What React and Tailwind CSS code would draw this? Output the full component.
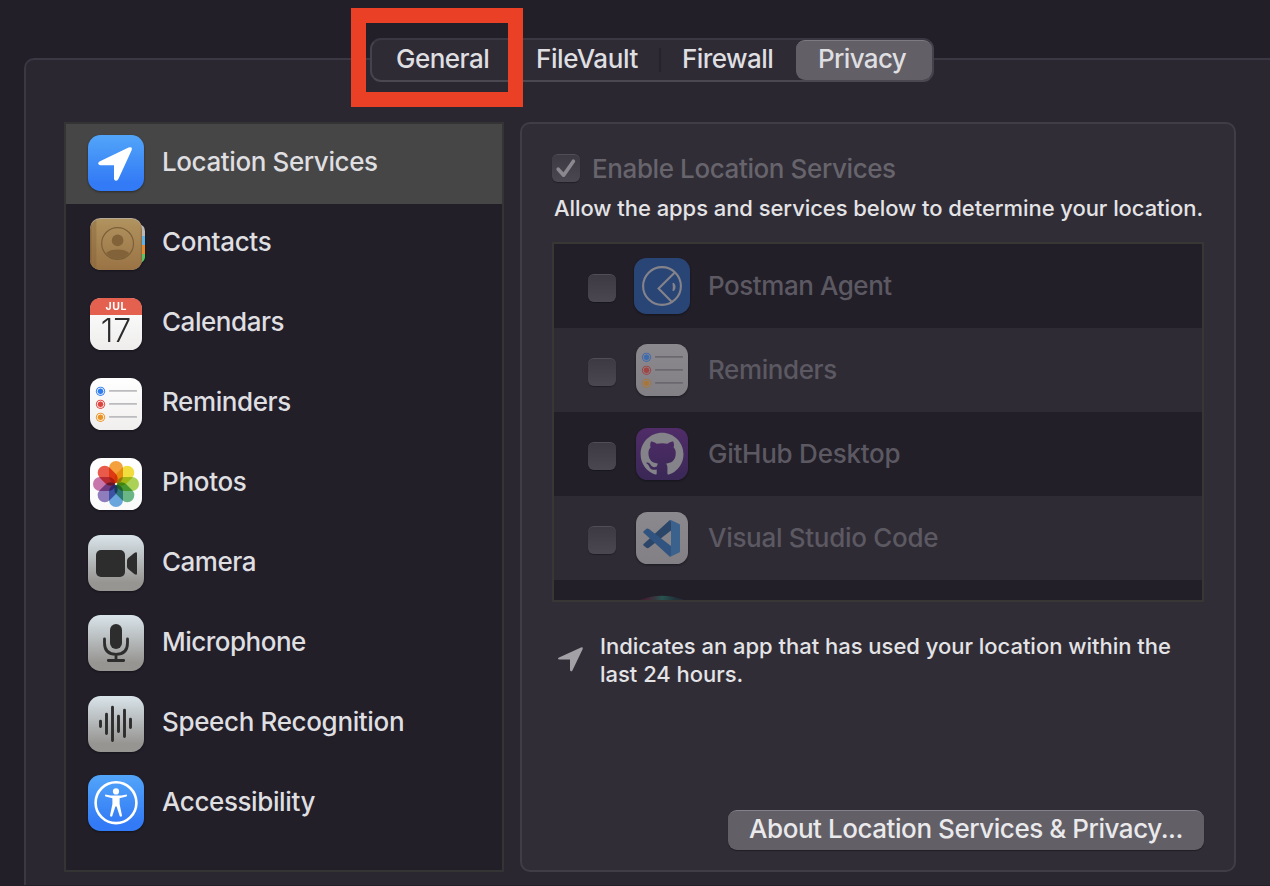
import React from "react";

function Tile({ id, from, to, children }) {
  return (
    <svg viewBox="0 0 56 56" className="block size-14 shrink-0 overflow-visible drop-shadow-[0_1px_1px_rgba(0,0,0,0.4)]">
      <defs>
        <linearGradient id={id} x1="0" y1="0" x2="0" y2="1">
          <stop offset="0" stopColor={from} />
          <stop offset="0.85" stopColor={to} />
        </linearGradient>
      </defs>
      <rect width="56" height="56" rx="12.5" fill={`url(#${id})`} />
      {children}
    </svg>
  );
}

function SmallTile({ id, from, to, children }) {
  return (
    <svg viewBox="0 0 56 56" className="block size-14 shrink-0 overflow-visible drop-shadow-[0_1px_1px_rgba(0,0,0,0.4)]">
      <defs>
        <linearGradient id={id} x1="0" y1="0" x2="0" y2="1">
          <stop offset="0" stopColor={from} />
          <stop offset="1" stopColor={to} />
        </linearGradient>
      </defs>
      <rect x="2" y="2" width="52" height="52" rx="11.5" fill={`url(#${id})`} />
      {children}
    </svg>
  );
}

function LocationIcon() {
  return (
    <Tile id="loc" from="#52a5f9" to="#337bf6">
      <path d="M12 26.2 L40.6 12.6 Q44.8 11 43.6 15.2 L30.4 44 Q29.2 46.4 27.2 45.6 Q26 45 26 43.4 V30.2 H12.4 Q10.4 30 10.2 28.4 Q10.1 27 12 26.2 Z" fill="#fff" />
    </Tile>
  );
}

function ContactsIcon() {
  return (
    <svg viewBox="0 0 56 56" className="block size-14 shrink-0 overflow-visible drop-shadow-[0_1px_1px_rgba(0,0,0,0.4)]">
      <defs>
        <linearGradient id="book" x1="0" y1="0" x2="0" y2="1">
          <stop offset="0" stopColor="#b0935f" />
          <stop offset="1" stopColor="#9a7344" />
        </linearGradient>
        <linearGradient id="spine" x1="0" y1="0" x2="1" y2="0">
          <stop offset="0" stopColor="#6d4f2c" stopOpacity="0.7" />
          <stop offset="0.05" stopColor="#7e5c34" stopOpacity="0.3" />
          <stop offset="0.1" stopColor="#7e5c34" stopOpacity="0.4" />
          <stop offset="0.14" stopColor="#7e5c34" stopOpacity="0" />
          <stop offset="0.96" stopColor="#7e5c34" stopOpacity="0" />
          <stop offset="1" stopColor="#6d4f2c" stopOpacity="0.5" />
        </linearGradient>
      </defs>
      <path d="M50 8 Q57 9 57 15 V20 H50 Z" fill="#b9b9b7" />
      <rect x="50" y="20" width="7" height="9" fill="#5fb2e6" />
      <rect x="50" y="29" width="7" height="9" fill="#e58a2d" />
      <path d="M50 38 H57 V41 Q57 46 50 48 Z" fill="#5dc264" />
      <rect x="2" y="2" width="52" height="52" rx="10.5" fill="#b5aa95" />
      <rect x="2" y="3" width="52" height="51" rx="10.5" fill="url(#book)" />
      <rect x="2" y="3" width="52" height="51" rx="10.5" fill="url(#spine)" />
      <circle cx="29.6" cy="27.5" r="15.9" fill="none" stroke="#7c5f38" strokeWidth="1.2" />
      <circle cx="29.6" cy="24.4" r="5.8" fill="#826339" />
      <path d="M18 37 Q22 33.6 29.6 33.6 Q37.2 33.6 41.2 37 Q36.5 43 29.6 43 Q22.7 43 18 37 Z" fill="#826339" />
    </svg>
  );
}

function CalendarIcon() {
  return (
    <SmallTile id="cal" from="#ffffff" to="#eeedec">
      <path d="M2 19 V13.5 Q2 2 13.5 2 H42.5 Q54 2 54 13.5 V19 Z" fill="#e4604f" />
      <text x="28.2" y="14" textAnchor="middle" fontFamily="Inter, sans-serif" fontWeight="700" fontSize="10.5" letterSpacing="0.6" fill="#fff">JUL</text>
      <text x="28" y="46" textAnchor="middle" fontFamily="Inter, sans-serif" fontWeight="300" fontSize="32" letterSpacing="0" fill="#2c2c2c">17</text>
    </SmallTile>
  );
}

function RemindersIcon({ id, dim }) {
  const dots = dim ? ["#3e6aae", "#a04444", "#a6763a"] : ["#2f7cf0", "#dd4540", "#ea9427"];
  const ring = dim ? "#89878c" : "#ffffff";
  return (
    <SmallTile id={id} from={dim ? "#8b898e" : "#ffffff"} to={dim ? "#828085" : "#f0efee"}>
      {dots.map((c, i) => (
        <g key={c}>
          <circle cx="12.5" cy={15.3 + i * 13} r="4.6" fill={c} />
          <circle cx="12.5" cy={15.3 + i * 13} r="3.3" fill="none" stroke={ring} strokeWidth="0.9" />
          <rect x="21" y={14 + i * 13} width="28" height="1.8" rx="0.6" fill={dim ? "#6b696f" : "#bcbcbe"} />
        </g>
      ))}
    </SmallTile>
  );
}

function PhotosIcon() {
  const petals = ["#f2992e", "#f0dc2f", "#a5cf4a", "#5fb07c", "#5f9fdc", "#8672b8", "#c36aa4", "#e84e3c"];
  return (
    <SmallTile id="photos" from="#ffffff" to="#fafafa">
      <g style={{ isolation: "isolate" }}>
        {petals.map((c, i) => (
          <rect key={c} x="21" y="5" width="14" height="22.5" rx="7" fill={c} transform={`rotate(${i * 45} 28 28)`} style={{ mixBlendMode: "multiply" }} fillOpacity="0.93" />
        ))}
      </g>
      <circle cx="28" cy="28" r="1.1" fill="#fff" />
    </SmallTile>
  );
}

function CameraIcon() {
  return (
    <Tile id="cam" from="#d9e4ea" to="#979592">
      <rect x="8" y="15" width="29" height="27" rx="5" fill="#2d2d2d" />
      <path d="M39 25.5 Q39 24 40.2 22.9 L46.3 17.9 Q49 16.2 49 18.6 V38.4 Q49 40.8 46.3 39.1 L40.2 34.1 Q39 33 39 31.5 Z" fill="#2d2d2d" />
    </Tile>
  );
}

function MicrophoneIcon() {
  return (
    <Tile id="mic" from="#d9e4ea" to="#979592">
      <rect x="22" y="9" width="12" height="25" rx="6" fill="#2d2d2d" />
      <path d="M16.5 24 V28 Q16.5 39.3 28 39.3 Q39.5 39.3 39.5 28 V24 M28 39.3 V45.5 M20.3 45.5 H35.7" fill="none" stroke="#2d2d2d" strokeWidth="2.8" strokeLinecap="round" />
    </Tile>
  );
}

function SpeechIcon() {
  return (
    <Tile id="speech" from="#d9e4ea" to="#979592">
      <path d="M12.5 25.3 V30.5 M18.5 18.3 V37.5 M24.5 11.3 V44.5 M30.5 20.3 V35.5 M36.5 14.3 V40.5 M42.5 23.3 V31.5" fill="none" stroke="#2d2d2d" strokeWidth="2.9" strokeLinecap="round" />
    </Tile>
  );
}

function AccessibilityIcon() {
  return (
    <Tile id="acc" from="#52a5f9" to="#337bf6">
      <circle cx="28" cy="27.7" r="20.4" fill="none" stroke="#fff" strokeWidth="2.6" />
      <circle cx="28" cy="16.4" r="3.1" fill="#fff" />
      <path d="M17.3 19.4 Q28 21.8 38.7 19.4 Q39.6 21 38.4 21.4 L31.6 23.2 V29 L34 40.5 Q33.4 42.5 31.8 41.3 L28.6 31.4 H27.4 L24.2 41.3 Q22.6 42.5 22 40.5 L24.4 29 V23.2 L17.6 21.4 Q16.4 21 17.3 19.4 Z" fill="#fff" />
    </Tile>
  );
}

function PostmanIcon() {
  return (
    <Tile id="postman" from="#294576" to="#294576">
      <g fill="none" stroke="#85838a" strokeWidth="2.1">
        <circle cx="28" cy="28" r="18.9" />
        <path d="M40.8 14.6 L24.6 30.6 L37.4 43.4" />
        <path d="M39.2 25.2 Q42.4 29 39.2 32.8 Q40 29 39.2 25.2 Z" strokeWidth="1.5" />
      </g>
    </Tile>
  );
}

function GitHubIcon() {
  return (
    <SmallTile id="github" from="#502c68" to="#3a2856">
      <path
        transform="translate(6.6 6.8) scale(2.68)"
        fill="#85838a"
        d="M8 0C3.58 0 0 3.58 0 8c0 3.54 2.29 6.53 5.47 7.59.4.07.55-.17.55-.38 0-.19-.01-.82-.01-1.49-2.01.37-2.53-.49-2.69-.94-.09-.23-.48-.94-.82-1.13-.28-.15-.68-.52-.01-.53.63-.01 1.08.58 1.23.82.72 1.21 1.87.87 2.33.66.07-.52.28-.87.51-1.07-1.78-.2-3.64-.89-3.64-3.95 0-.87.31-1.59.82-2.15-.08-.2-.36-1.02.08-2.12 0 0 .67-.21 2.2.82.64-.18 1.32-.27 2-.27s1.36.09 2 .27c1.53-1.04 2.2-.82 2.2-.82.44 1.1.16 1.92.08 2.12.51.56.82 1.27.82 2.15 0 3.07-1.87 3.75-3.65 3.95.29.25.54.73.54 1.48 0 1.07-.01 1.93-.01 2.2 0 .21.15.46.55.38A8.013 8.013 0 0016 8c0-4.42-3.58-8-8-8z"
      />
    </SmallTile>
  );
}

function VSCodeIcon() {
  return (
    <SmallTile id="vscode" from="#8b898e" to="#828085">
      <path d="M9.6 34 L35.6 10.2 L37 11 V20.5 L15.2 37.6 Q13.6 38.8 12 37.6 L9.6 35.6 Q8.8 34.8 9.6 34 Z" fill="#2b4669" />
      <path d="M9.6 21.2 L12.4 18.8 Q13.6 18 15.2 19.2 L37 36 V46 L35.6 46.4 L9.6 22.8 Q8.8 22 9.6 21.2 Z" fill="#30547f" />
      <path d="M36.9 10 L45.2 14 Q46 14.4 46 15.4 V41.2 Q46 42.2 45.2 42.6 L36.9 46.6 Q36 46.8 35.4 46.4 Q37 45.8 37 44 V12.6 Q37 10.8 35.4 10.2 Q36 9.8 36.9 10 Z" fill="#3b628d" />
    </SmallTile>
  );
}

function ChromeIcon() {
  return (
    <svg viewBox="0 0 56 56" className="block size-14 shrink-0">
      <defs>
        <linearGradient id="chrome" x1="0" y1="0" x2="1" y2="0">
          <stop offset="0.12" stopColor="#451f31" />
          <stop offset="0.36" stopColor="#353a41" />
          <stop offset="0.5" stopColor="#28534f" />
          <stop offset="0.8" stopColor="#22303a" />
        </linearGradient>
      </defs>
      <path d="M5 6.5 Q28 -3 51 6.5 V50 H5 Z" fill="url(#chrome)" />
    </svg>
  );
}

const services = [
  { name: "Location Services", Icon: LocationIcon, pad: "pt-[11px]", track: "tracking-[-0.4px]", on: true },
  { name: "Contacts", Icon: ContactsIcon, pad: "pt-3", track: "tracking-[-0.3px]" },
  { name: "Calendars", Icon: CalendarIcon, pad: "pt-3", track: "tracking-[-0.45px]" },
  { name: "Reminders", Icon: RemindersIcon, pad: "pt-3", track: "tracking-[-0.4px]" },
  { name: "Photos", Icon: PhotosIcon, pad: "pt-3", track: "tracking-[-0.3px]" },
  { name: "Camera", Icon: CameraIcon, pad: "pt-[11px]", track: "tracking-[-0.5px]" },
  { name: "Microphone", Icon: MicrophoneIcon, pad: "pt-[11px]", track: "tracking-[-0.5px]" },
  { name: "Speech Recognition", Icon: SpeechIcon, pad: "pt-3", track: "tracking-[-0.35px]" },
  { name: "Accessibility", Icon: AccessibilityIcon, pad: "pt-[11px]", track: "tracking-[-0.4px]" },
];

const apps = [
  { name: "Postman Agent", Icon: PostmanIcon, track: "tracking-[-0.45px]" },
  { name: "Reminders", Icon: RemindersIcon, track: "tracking-[-0.4px]" },
  { name: "GitHub Desktop", Icon: GitHubIcon, track: "tracking-[-0.25px]" },
  { name: "Visual Studio Code", Icon: VSCodeIcon, track: "tracking-[-0.3px]" },
];

function CheckBox({ checked }) {
  return (
    <span className="flex size-7 shrink-0 items-center justify-center rounded-[6px] border-t border-[#514e58] bg-linear-to-b from-[#3d3a44] to-[#4a4751] shadow-[0_1px_1px_rgba(0,0,0,0.3)]">
      {checked && (
        <svg viewBox="0 0 28 28" className="size-7 shrink-0">
          <path d="M6.2 14.2 L11.6 20.2 L21.4 6.2" fill="none" stroke="#8b898f" strokeWidth="3.6" strokeLinecap="round" strokeLinejoin="round" />
        </svg>
      )}
    </span>
  );
}

export default function App() {
  return (
    <div className="relative flex h-[886px] w-[1270px] flex-col overflow-hidden bg-[#221f29] pt-[58px] pl-6 font-['Inter',sans-serif] text-[26px] leading-8 font-[460] text-[#dfdee0]">
      <main className="h-[827px] rounded-tl-[10px] border-t-2 border-l-2 border-[#3b3843] bg-[#2a2731]">
        <nav className="relative -mt-[22px] ml-[344px] flex h-11 w-[564px] rounded-[11px] border-2 border-[#45424d] border-t-[#3b3843] border-b-[#4b4852] bg-[#2e2b35] whitespace-nowrap">
          <span className="w-[154px] pt-[3px] pl-6 tracking-[-0.5px]">General</span>
          <span className="w-[133px] pt-[3px] pl-[10px] tracking-[-0.4px]">FileVault</span>
          <span className="mt-2 h-6 w-0.5 bg-[#26232d]" />
          <span className="w-[135px] pt-[3px] pl-[21px] tracking-[-0.55px]">Firewall</span>
          <span className="h-10 w-[136px] rounded-[9px] border-t border-[#7d7a82] bg-[#625f67] pt-0.5 pl-[22px] tracking-[-0.65px]">Privacy</span>
        </nav>

        <div className="mt-10 ml-[38px] flex gap-4">
          <aside className="h-[750px] w-[440px] border-2 border-[#353434] bg-[#221f29]">
            {services.map(({ name, Icon, pad, track, on }) => (
              <div key={name} className={`flex h-20 items-start pl-[22px] ${pad} ${on ? "bg-[#464646]" : ""}`}>
                <Icon id="rem" />
                <div className="flex h-14 items-start pl-[18px]">
                  <span className={`whitespace-nowrap ${pad === "pt-3" ? "mt-[10px]" : "mt-[11px]"} ${track}`}>{name}</span>
                </div>
              </div>
            ))}
          </aside>

          <section className="flex h-[750px] w-[716px] flex-col rounded-[10px] border-2 border-[#403d47] bg-[#302d37] px-[30px] pt-[30px]">
            <div className="flex h-7 items-center gap-3 text-[#67646c]">
              <CheckBox checked />
              <span className="mt-0.5 whitespace-nowrap tracking-[-0.4px]">Enable Location Services</span>
            </div>
            <p className="mt-[10px] pl-0.5 text-[22px] leading-8 whitespace-nowrap text-[#e4e3e5] tracking-[-0.06px]">Allow the apps and services below to determine your location.</p>
            <div className="mt-[18px] h-[360px] w-[652px] shrink-0 overflow-hidden border-2 border-[#393636] bg-[#221f29] text-[#5c5962]">
              {apps.map(({ name, Icon, track }, i) => (
                <div key={name} className={`flex h-[84px] items-center pl-[34px] ${i % 2 ? "bg-[#2e2b35]" : ""}`}>
                  <span className="mt-1"><CheckBox /></span>
                  <span className="ml-[18px]"><Icon id="remdim" dim /></span>
                  <span className={`-mt-px ml-[18px] whitespace-nowrap ${track}`}>{name}</span>
                </div>
              ))}
              <div className="flex h-[84px] items-center pl-20"><ChromeIcon /></div>
            </div>
            <div className="mt-[30px] flex">
              <svg viewBox="0 0 26 26" className="mt-3.5 ml-1.5 size-[26px]">
                <path d="M1 11.4 L23 1.4 Q25.6 0.6 24.6 3.2 L14.4 24.4 Q13.6 25.8 12.6 25 Q12 24.6 12 23.8 V13.6 H1.6 Q0 13.4 0 12.6 Q0 11.8 1 11.4 Z" fill="#a3a1a6" />
              </svg>
              <p className="ml-4 text-[22px] leading-7 whitespace-nowrap text-[#e4e3e5] tracking-[-0.02px]">Indicates an app that has used your location within the<br />last 24 hours.</p>
            </div>
            <button className="mt-auto mb-5 h-10 w-[476px] shrink-0 self-end rounded-[9px] border-t border-[#84818a] bg-[#625f67] pb-1 leading-[35px] whitespace-nowrap text-[#eae9eb] shadow-[0_1px_1px_rgba(0,0,0,0.35)] tracking-[-0.45px]">About Location Services &amp; Privacy...</button>
          </section>
        </div>
      </main>
      <div className="absolute top-2 left-[351px] h-[99px] w-[172px] border-15 border-[#ea4025]" />
    </div>
  );
}
